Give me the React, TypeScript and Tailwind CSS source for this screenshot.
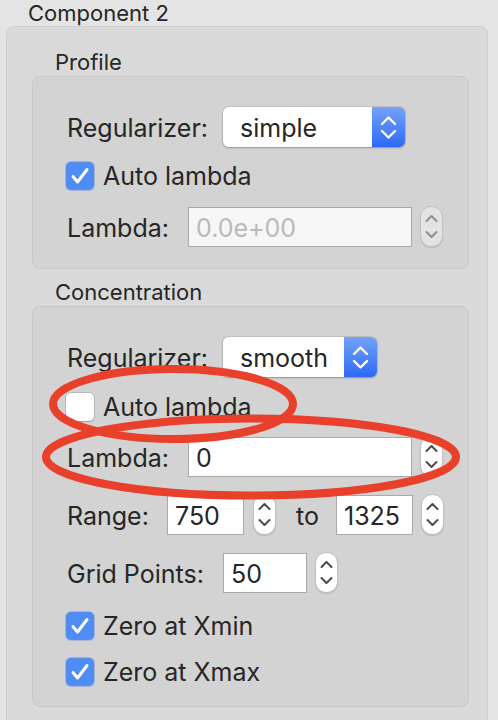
import React from "react";

function Stepper({ disabled = false }: { disabled?: boolean }) {
  const c = disabled ? "#8e8e8e" : "#4a4a4a";
  return (
    <div
      className={`w-[23px] h-[41px] shrink-0 rounded-[11px] border ${
        disabled ? "bg-[#e3e3e3] border-[#c4c4c4]" : "bg-white border-[#c0c0c0]"
      } shadow-[0_1px_1px_rgba(0,0,0,0.12)] flex items-center justify-center`}
    >
      <svg width="21" height="39" viewBox="0 0 21 39" fill="none">
        <path d="M5.5 14 L10.5 9 L15.5 14" stroke={c} strokeWidth="2" strokeLinecap="round" strokeLinejoin="round" />
        <path d="M5.5 25 L10.5 30 L15.5 25" stroke={c} strokeWidth="2" strokeLinecap="round" strokeLinejoin="round" />
      </svg>
    </div>
  );
}

function Select({ value, wide }: { value: string; wide: boolean }) {
  return (
    <div
      className={`flex h-[40px] ${wide ? "w-[182px]" : "w-[154px]"} rounded-[6px] shadow-[0_0_0_1px_rgba(0,0,0,0.08),0_1px_2px_rgba(0,0,0,0.25)]`}
    >
      <div className="flex-1 bg-white rounded-l-[6px] pl-[17px] pt-[4px] flex items-center">{value}</div>
      <div className="w-[33px] rounded-r-[6px] bg-linear-to-b from-[#73a2f8] to-[#2d69f6] flex items-center justify-center">
        <svg width="33" height="40" viewBox="0 0 33 40" fill="none">
          <path d="M10 17 L16.5 10.5 L23 17" stroke="white" strokeWidth="2.4" strokeLinecap="round" strokeLinejoin="round" />
          <path d="M10 24 L16.5 30.5 L23 24" stroke="white" strokeWidth="2.4" strokeLinecap="round" strokeLinejoin="round" />
        </svg>
      </div>
    </div>
  );
}

function Checkbox({ checked, label }: { checked: boolean; label: string }) {
  return (
    <div className="flex items-center h-[28px] -ml-[1px]">
      <div
        className={`w-[28px] h-[28px] shrink-0 rounded-[5px] flex items-center justify-center ${
          checked
            ? "bg-[#4f8cf6] shadow-[0_0_0_1px_rgba(40,90,220,0.25)]"
            : "bg-white shadow-[0_0_0_1px_rgba(0,0,0,0.12),0_1px_1px_rgba(0,0,0,0.15)]"
        }`}
      >
        {checked && (
          <svg width="28" height="28" viewBox="0 0 28 28" fill="none">
            <path d="M7 14.5 L11.5 20 L21 7.5" stroke="white" strokeWidth="3" strokeLinecap="round" strokeLinejoin="round" />
          </svg>
        )}
      </div>
      <span className="ml-[9px] pt-[2px]">{label}</span>
    </div>
  );
}

function Field({ value, w, disabled = false }: { value: string; w: string; disabled?: boolean }) {
  return (
    <div
      className={`${w} h-[40px] shrink-0 border border-[#a9a9a9] ${
        disabled ? "bg-[#f6f6f6] text-[#bababa]" : "bg-white"
      } pl-[7px] pt-[4px] flex items-center`}
    >
      {value}
    </div>
  );
}

export default function App() {
  return (
    <div className="relative w-[498px] h-[720px] overflow-hidden bg-[#e4e4e4] text-[#262626] font-['Inter',sans-serif] text-[25px]">
      <div className="h-[26px] pl-[28px] leading-[26px] text-[22px]">Component 2</div>
      <div className="ml-[6px] w-[482px] rounded-[8px] border border-[#cfcfcf] bg-[#dadada] pt-[22px] pl-[25px] pr-[18px] pb-[40px]">
        <div className="h-[27px] pl-[23px] leading-[27px] text-[22px]">Profile</div>
        <div className="rounded-[8px] border border-[#c8c8c8] bg-[#d3d3d3] pl-[34px] pt-[30px] pb-[21px]">
          <div className="flex items-center h-[40px]">
            <div className="w-[156px] pt-[4px]">Regularizer:</div>
            <Select value="simple" wide />
          </div>
          <div className="mt-[15px]">
            <Checkbox checked label="Auto lambda" />
          </div>
          <div className="mt-[16px] flex items-center h-[41px]">
            <div className="w-[121px] pt-[4px]">Lambda:</div>
            <Field value="0.0e+00" w="w-[224px]" disabled />
            <div className="ml-[8px]">
              <Stepper disabled />
            </div>
          </div>
        </div>

        <div className="mt-[10px] h-[27px] pl-[23px] leading-[27px] text-[22px]">Concentration</div>
        <div className="rounded-[8px] border border-[#c8c8c8] bg-[#d3d3d3] pl-[34px] pt-[30px] pb-[20px]">
          <div className="flex items-center h-[40px]">
            <div className="w-[156px] pt-[4px]">Regularizer:</div>
            <Select value="smooth" wide={false} />
          </div>
          <div className="mt-[16px]">
            <Checkbox checked={false} label="Auto lambda" />
          </div>
          <div className="mt-[15px] flex items-center h-[41px]">
            <div className="w-[121px] pt-[4px]">Lambda:</div>
            <Field value="0" w="w-[224px]" />
            <div className="ml-[8px]">
              <Stepper />
            </div>
          </div>
          <div className="mt-[17px] flex items-center h-[41px]">
            <div className="w-[100px] pt-[4px]">Range:</div>
            <Field value="750" w="w-[77px]" />
            <div className="ml-[9px]">
              <Stepper />
            </div>
            <div className="ml-[20px] w-[40px] pt-[4px]">to</div>
            <Field value="1325" w="w-[77px]" />
            <div className="ml-[8px]">
              <Stepper />
            </div>
          </div>
          <div className="mt-[17px] flex items-center h-[41px]">
            <div className="w-[156px] pt-[4px]">Grid Points:</div>
            <Field value="50" w="w-[84px]" />
            <div className="ml-[8px]">
              <Stepper />
            </div>
          </div>
          <div className="mt-[19px]">
            <Checkbox checked label="Zero at Xmin" />
          </div>
          <div className="mt-[18px]">
            <Checkbox checked label="Zero at Xmax" />
          </div>
        </div>
      </div>

      <svg className="absolute left-0 top-0 pointer-events-none" width="498" height="720" viewBox="0 0 498 720" fill="none">
        <ellipse cx="173" cy="404" rx="120" ry="35" stroke="#e8402a" strokeWidth="8" />
        <ellipse cx="251" cy="457" rx="205" ry="38.5" stroke="#e8402a" strokeWidth="8" />
      </svg>
    </div>
  );
}
